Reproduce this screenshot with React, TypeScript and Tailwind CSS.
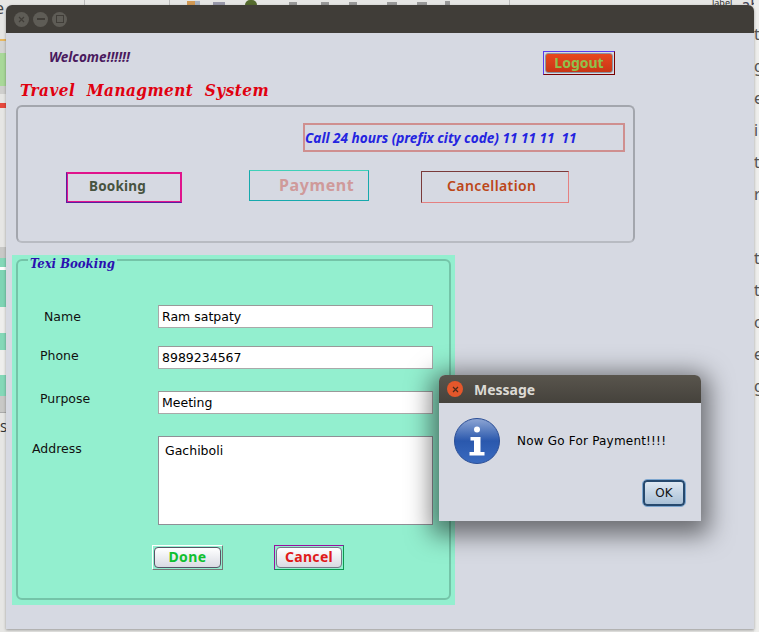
import React from "react";

const ui = { fontFamily: '"Noto Sans", "Open Sans", sans-serif' };
const dejavu = { fontFamily: '"DejaVu Sans", sans-serif' };
const serif = { fontFamily: '"DejaVu Serif Condensed", "DejaVu Serif", serif' };

function Field({ label, labelLeft, labelTop, top, value }: { label: string; labelLeft: string; labelTop: string; top: string; value: string }) {
  return (
    <div className={`flex ${top}`}>
      <div className="w-[140px] shrink-0">
        <div className={`${labelLeft} ${labelTop} text-[12.5px] leading-4 text-[#111]`} style={dejavu}>{label}</div>
      </div>
      <div className="w-[275px] h-[23px] bg-white border border-[#a9a9a9] border-t-[#999] pl-[3px] text-[12.5px] leading-[21px] text-black" style={dejavu}>{value}</div>
    </div>
  );
}

function InfoIcon() {
  return (
    <svg width="46" height="46" viewBox="0 0 46 46" className="shrink-0">
      <defs>
        <linearGradient id="infoG" x1="0" y1="0" x2="0" y2="1">
          <stop offset="0" stopColor="#8ea6d4" />
          <stop offset="0.5" stopColor="#2a58ad" />
          <stop offset="1" stopColor="#3a6bc0" />
        </linearGradient>
      </defs>
      <circle cx="23" cy="23" r="22.5" fill="url(#infoG)" stroke="#2c4f96" />
      <circle cx="23" cy="11.5" r="3" fill="#fff" />
      <path d="M16.5 19h10v15h4v3.5h-15V34h4.5V22.5h-3.5z" fill="#fff" />
    </svg>
  );
}

function Backdrop() {
  const rows = ["t", "g", "e", "i", "t", "r", "", "t", "t", "o", "e", "g"];
  return (
    <>
      <div className="absolute left-0 top-0 w-[6px] h-full flex flex-col bg-[#e6e6e4] overflow-hidden" style={ui}>
        <div className="h-[39px] text-[16px] leading-[16px] text-[#444] -ml-[5px]">e</div>
        <div className="h-[2px] bg-[#e8b860]" />
        <div className="h-[12px] bg-[#d4d4d2]" />
        <div className="h-[33px] bg-[#a8d898]" />
        <div className="h-[8px] bg-[#cfcfcd]" />
        <div className="h-[9px]" />
        <div className="h-[5px] bg-[#e6483c]" />
        <div className="h-[139px]" />
        <div className="h-[11px] bg-[#c8c8c6]" />
        <div className="h-[9px] bg-[#84d8b8]" />
        <div className="h-[3px] bg-white" />
        <div className="h-[37px] bg-[#7ed4b4]" />
        <div className="h-[26px] bg-[#eeeeec]" />
        <div className="h-[17px] bg-[#84d8b8]" />
        <div className="h-[25px] bg-[#eeeeec]" />
        <div className="h-[21px] bg-[#84d8b8]" />
        <div className="h-[16px] bg-[#c8c8c6]" />
        <div className="h-[28px] border-t border-[#aaa] pt-[6px] text-[13px] leading-4 text-[#333]">S</div>
      </div>
      <div className="absolute left-[6px] top-0 w-[700px] h-[5px] bg-[#e6e6e4] flex overflow-hidden">
        <div className="w-[79px] border-r border-[#bbb]" />
        <div className="w-[85px] border-r border-[#bbb]" />
        <div className="w-[17px]" />
        <div className="w-[8px] h-[4px] mt-px bg-[#d29a55]" />
        <div className="w-[5px] h-[4px] mt-px bg-[#a9b4c4]" />
        <div className="w-[12px] h-[3px] ml-[13px] mt-[2px] bg-[#99a]" />
        <div className="w-[12px]" />
        <div className="w-[12px] h-[5px] ml-[8px] bg-[#556b2f] rounded-t-full" />
        <div className="w-[8px] h-[3px] ml-[32px] mt-[2px] bg-[#999]" />
        <div className="w-[8px] h-[3px] ml-[24px] mt-[2px] bg-[#999]" />
        <div className="w-[8px] h-[3px] ml-[20px] mt-[2px] bg-[#999]" />
        <div className="w-[10px] h-[3px] ml-[30px] mt-[2px] bg-[#999]" />
        <div className="w-[10px] h-[3px] ml-[20px] mt-[2px] bg-[#999]" />
        <div className="w-[5px] h-[4px] ml-[18px] mt-px bg-[#999]" />
        <div className="w-[60px] border-r border-[#bbb]" />
      </div>
      <div className="absolute left-[706px] top-0 w-[53px] h-[5px] bg-[#e6e6e4] overflow-hidden flex text-[#333]" style={ui}>
        <span className="text-[9px] leading-[6px] ml-[6px]">label</span>
        <span className="text-[16px] leading-[10px] ml-[9px] text-[#445]">abe</span>
      </div>
      <div className="absolute left-[754px] top-0 w-[5px] h-full bg-[#eeeeec] overflow-hidden flex flex-col pt-[18px] text-[#555]" style={ui}>
        {rows.map((r, i) => (
          <div key={i} className="h-[32px] text-[16px] leading-[32px]">{r}</div>
        ))}
      </div>
    </>
  );
}

export default function App() {
  return (
    <div className="relative w-[759px] h-[632px] overflow-hidden bg-[#e6e6e4]">
      <Backdrop />

      {/* main window */}
      <div className="absolute left-[6px] top-[5px] w-[748px] h-[624px] bg-[#d6d9e2] rounded-t-[6px] shadow-[0_1px_3px_rgba(0,0,0,0.35)] flex flex-col">
        <div className="h-[28px] shrink-0 bg-[#403d38] rounded-t-[6px] flex items-center gap-[4px] pl-[8px]">
          <div className="w-[15px] h-[15px] rounded-full bg-[#5e5c56] flex items-center justify-center">
            <svg width="7" height="7" viewBox="0 0 7 7"><path d="M1 1l5 5M6 1l-5 5" stroke="#403d38" strokeWidth="1.2" /></svg>
          </div>
          <div className="w-[15px] h-[15px] rounded-full bg-[#5e5c56] flex items-center justify-center">
            <div className="w-[8px] h-[2px] bg-[#403d38]" />
          </div>
          <div className="w-[15px] h-[15px] rounded-full bg-[#5e5c56] flex items-center justify-center">
            <div className="w-[8px] h-[8px] border border-[#403d38]" />
          </div>
        </div>

        {/* welcome + logout */}
        <div className="flex items-start pt-[18px] h-[42px] shrink-0">
          <div className="ml-[43px] -mt-[2px] w-[494px] text-[13.5px] leading-4 font-bold italic text-[#4a1a5e]" style={ui}>Welcome!!!!!!</div>
          <div className="w-[72px] h-[24px] border border-[#7a0000] border-t-[#5a3cf0] border-l-[#5a3cf0] p-px bg-[#d6d9e2]">
            <div className="w-full h-full rounded-[3px] border border-[#8b93a0] bg-gradient-to-b from-[#e8471f] to-[#c93616] flex items-center justify-center text-[14px] font-bold leading-none text-[#8fc04c]" style={ui}>Logout</div>
          </div>
        </div>

        <div className="ml-[14px] mt-[4px] h-[23px] shrink-0 text-[17px] leading-[23px] font-bold italic tracking-[0.44px] text-[#e0000f] whitespace-pre" style={serif}>Travel  Managment  System</div>

        {/* top group */}
        <div className="ml-[10px] mt-[3px] w-[619px] h-[138px] shrink-0 rounded-[6px] border-2 border-[#a3a6ad] border-b-[#b8bbc2] flex flex-col">
          <div className="ml-[285px] mt-[16px] w-[322px] h-[29px] border-2 border-[#cf8f8f] text-[13.6px] leading-[25px] font-bold italic text-[#2424e0] whitespace-pre" style={ui}>Call 24 hours (prefix city code) 11 11 11  11</div>
          <div className="flex items-start mt-[20px] ml-[48px]">
            <div className="w-[116px] h-[31px] border border-[#e0148c] border-l-[#5b1fa0] border-b-[#5b1fa0] shadow-[inset_0_0_0_1px_#e0148c] flex items-center pl-[22px] pb-[2px] text-[13.5px] font-bold tracking-[0.2px] text-[#47533f]" style={ui}>Booking</div>
            <div className="ml-[67px] -mt-[2px] w-[120px] h-[31px] border border-[#17a9ad] border-t-[#3fd0b8] flex items-center pl-[29px] pb-[2px] text-[16px] font-bold tracking-[0.6px] text-[#cf9a9a]" style={ui}>Payment</div>
            <div className="ml-[52px] -mt-[1px] w-[148px] h-[32px] border border-[#7a3a3a] border-r-[#e58080] border-b-[#e58080] flex items-center pl-[25px] pb-[3px] text-[14px] font-semibold tracking-[0.4px] text-[#bc4618]" style={ui}>Cancellation</div>
          </div>
        </div>

        {/* green booking panel */}
        <div className="ml-[6px] mt-[12px] w-[443px] h-[350px] shrink-0 bg-[#93efcf] p-[4px]">
          <div className="relative w-[435px] h-[341px] rounded-[6px] border-2 border-[#74c4a8] flex flex-col">
            <div className="absolute -top-[5px] left-[10px] bg-[#93efcf] px-[2px] text-[13px] leading-[16px] font-bold italic text-[#2a10b0]" style={serif}>Texi Booking</div>
            <Field top="mt-[44px]" label="Name" labelLeft="ml-[26px]" labelTop="mt-[4px]" value="Ram satpaty" />
            <Field top="mt-[18px]" label="Phone" labelLeft="ml-[22px]" labelTop="mt-[2px]" value="8989234567" />
            <Field top="mt-[22px]" label="Purpose" labelLeft="ml-[22px]" labelTop="mt-0" value="Meeting" />
            <div className="flex mt-[22px]">
              <div className="w-[140px] shrink-0">
                <div className="ml-[14px] mt-[5px] text-[12.5px] leading-4 text-[#111]" style={dejavu}>Address</div>
              </div>
              <div className="w-[275px] h-[89px] bg-white border border-[#8f8f96] pl-[6px] pt-[6px] text-[12.5px] leading-4 text-black" style={dejavu}>Gachiboli</div>
            </div>
            <div className="flex mt-[20px] ml-[134px]">
              <div className="w-[71px] h-[25px] border border-[#777] border-t-white border-l-white p-px">
                <div className="w-full h-full rounded-[4px] border border-[#556] bg-gradient-to-b from-white to-[#d9dbe3] flex items-center justify-center pb-[2px] text-[14px] font-bold tracking-[0.4px] text-[#10c030]" style={ui}>Done</div>
              </div>
              <div className="ml-[51px] w-[70px] h-[25px] border border-[#0a9a50] border-t-[#9a10a0] border-l-[#9a10a0] p-px">
                <div className="w-full h-full rounded-[4px] border border-[#778] bg-gradient-to-b from-white to-[#d9dbe3] flex items-center justify-center pb-[2px] text-[14px] font-bold tracking-[0.3px] text-[#e01a1a]" style={ui}>Cancel</div>
              </div>
            </div>
          </div>
        </div>
      </div>

      {/* dialog */}
      <div className="absolute left-[439px] top-[375px] w-[262px] h-[146px] bg-[#d6d9e2] rounded-t-[6px] shadow-[0_6px_24px_8px_rgba(0,0,0,0.5)] flex flex-col">
        <div className="h-[28px] shrink-0 rounded-t-[6px] bg-gradient-to-b from-[#59554d] to-[#45423c] flex items-center pl-[8px]">
          <div className="w-[16px] h-[16px] rounded-full bg-[#e4572b] flex items-center justify-center">
            <svg width="7" height="7" viewBox="0 0 7 7"><path d="M1 1l5 5M6 1l-5 5" stroke="#4a2a1a" strokeWidth="1.2" /></svg>
          </div>
          <span className="ml-[11px] text-[14px] font-bold text-[#dcdad4]" style={ui}>Message</span>
        </div>
        <div className="flex items-center pl-[15px] mt-[15px]">
          <InfoIcon />
          <span className="ml-[17px] text-[12px] leading-4 text-black tracking-[0.2px]" style={dejavu}>Now Go For Payment!!!!</span>
        </div>
        <div className="flex justify-end mt-[16px] pr-[16px]">
          <div className="w-[42px] h-[26px] rounded-[4px] border-2 border-[#26496e] outline outline-1 outline-[#7da6cf] bg-gradient-to-b from-[#dfe8f2] to-[#a9c0d6] flex items-center justify-center text-[12px] text-[#111]" style={dejavu}>OK</div>
        </div>
      </div>
    </div>
  );
}
